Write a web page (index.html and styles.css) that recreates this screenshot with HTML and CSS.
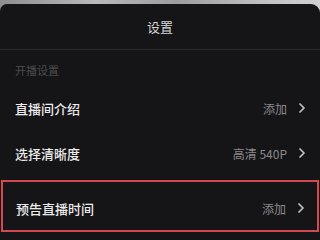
FILE: index.html
```html
<!DOCTYPE html>
<html lang="zh">
<head>
<meta charset="utf-8">
<link rel="stylesheet" href="styles.css">
</head>
<body>
<div class="sheet">
  <div class="header">设置</div>
  <div class="section">开播设置</div>
  <div class="row row-first">
    <span class="label">直播间介绍</span>
    <span class="value">添加</span>
    <svg class="chev" width="6" height="10" viewBox="0 0 6 10"><path d="M1 1 L5 5 L1 9" fill="none" stroke="#c4c4c4" stroke-width="1.7" stroke-linecap="round" stroke-linejoin="round"/></svg>
  </div>
  <div class="row row-second">
    <span class="label">选择清晰度</span>
    <span class="value">高清 540P</span>
    <svg class="chev" width="6" height="10" viewBox="0 0 6 10"><path d="M1 1 L5 5 L1 9" fill="none" stroke="#c4c4c4" stroke-width="1.7" stroke-linecap="round" stroke-linejoin="round"/></svg>
  </div>
  <div class="row row-marked">
    <span class="label">预告直播时间</span>
    <span class="value">添加</span>
    <svg class="chev" width="6" height="10" viewBox="0 0 6 10"><path d="M1 1 L5 5 L1 9" fill="none" stroke="#c4c4c4" stroke-width="1.7" stroke-linecap="round" stroke-linejoin="round"/></svg>
  </div>
</div>
</body>
</html>
```
FILE: styles.css
```css
html, body {
  margin: 0;
  padding: 0;
  width: 320px;
  height: 240px;
  overflow: hidden;
}
body {
  background: linear-gradient(90deg, #8e8e90 0%, #b9b9bb 30%, #9d9d9f 55%, #c4c4c6 85%, #d0d0d2 100%);
  font-family: "Noto Sans CJK SC", "Noto Sans", sans-serif;
}
.sheet {
  margin-top: 4px;
  height: 236px;
  background: #151417;
  border-radius: 7px 9px 0 0;
  display: flex;
  flex-direction: column;
}
.header {
  height: 46px;
  box-sizing: border-box;
  border-bottom: 1px solid #2b2a2e;
  display: flex;
  align-items: center;
  justify-content: center;
  font-size: 13px;
  color: #d6d6d6;
}
.section {
  height: 40px;
  display: flex;
  align-items: center;
  padding-left: 15px;
  font-size: 11px;
  color: #4c4c4f;
}
.row {
  display: flex;
  align-items: center;
  padding: 0 15px;
}
.row-first {
  height: 36px;
}
.row-second {
  height: 54px;
}
.row-marked {
  height: 52px;
  box-sizing: border-box;
  margin: 0 1px;
  border: 2px solid #d24a4e;
  padding: 4px 13px 0 13px;
}
.label {
  flex: 1;
  font-size: 13px;
  font-weight: 500;
  color: #ececec;
}
.value {
  font-size: 12px;
  color: #8a8a8c;
  margin-right: 12px;
}
.chev {
  display: block;
}
```
